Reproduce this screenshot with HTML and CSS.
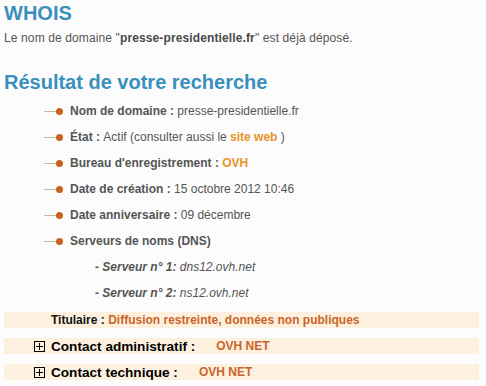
FILE: index.html
```html
<!DOCTYPE html>
<html lang="fr">
<head>
    <meta charset="UTF-8">
    <title>WHOIS</title>
    <link rel="stylesheet" href="styles.css">
</head>
<body>
    <div class="page">
        <h1 class="title">WHOIS</h1>
        <p class="intro">Le nom de domaine "<b>presse-presidentielle.fr</b>" est déjà déposé.</p>

        <h2 class="title result">Résultat de votre recherche</h2>
        <ul class="info">
            <li><span class="bullet"></span><b>Nom de domaine :</b>&nbsp;presse-presidentielle.fr</li>
            <li><span class="bullet"></span><b>État :</b>&nbsp;Actif (consulter aussi le&nbsp;<a href="#" class="link">site web</a>&nbsp;)</li>
            <li><span class="bullet"></span><b>Bureau d'enregistrement :</b>&nbsp;<a href="#" class="link">OVH</a></li>
            <li><span class="bullet"></span><b>Date de création :</b>&nbsp;15 octobre 2012 10:46</li>
            <li><span class="bullet"></span><b>Date anniversaire :</b>&nbsp;09 décembre</li>
            <li><span class="bullet"></span><b>Serveurs de noms (DNS)</b></li>
        </ul>
        <div class="dns">
            <p><b>- Serveur n° 1:</b> dns12.ovh.net</p>
            <p><b>- Serveur n° 2:</b> ns12.ovh.net</p>
        </div>

        <div class="band holder">
            <b>Titulaire :</b>&nbsp;<span class="value">Diffusion restreinte, données non publiques</span>
        </div>
        <div class="band contact">
            <span class="plus"></span>
            <b class="label">Contact administratif :</b>
            <span class="value">OVH NET</span>
        </div>
        <div class="band contact">
            <span class="plus"></span>
            <b class="label">Contact technique :</b>
            <span class="value">OVH NET</span>
        </div>
    </div>
</body>
</html>
```

FILE: styles.css
```css
body {
    margin: 0;
    background-color: #fcfcfc;
    font-family: "Liberation Sans", Arial, sans-serif;
    font-size: 12px;
    color: #555;
}
.page {
    padding: 1px 7px 0 4px;
}
.title {
    margin: 0;
    color: #3a8fbc;
    font-weight: bold;
}
h1.title {
    font-size: 20px;
    line-height: 24px;
}
.intro {
    margin: 6px 0 0;
    line-height: 14px;
    letter-spacing: 0.12px;
}
.intro b {
    color: #4a4a4a;
}
.result {
    margin-top: 24px;
    font-size: 20px;
    line-height: 26px;
}
.info {
    list-style: none;
    margin: 3px 0 0;
    padding: 0 0 0 40px;
}
.info li {
    display: flex;
    align-items: center;
    height: 26px;
    white-space: nowrap;
}
.info b {
    color: #555;
}
.bullet {
    display: flex;
    align-items: center;
    margin-right: 7px;
}
.bullet::before {
    content: "";
    width: 12px;
    height: 1px;
    background-color: #c9b79d;
}
.bullet::after {
    content: "";
    width: 7px;
    height: 7px;
    border-radius: 50%;
    background-color: #c9601c;
}
.link {
    color: #e8922a;
    font-weight: bold;
    text-decoration: none;
}
.dns {
    padding-left: 91px;
}
.dns p {
    margin: 0;
    line-height: 26px;
    font-style: italic;
}
.band {
    display: flex;
    align-items: center;
    height: 16px;
    margin-bottom: 10px;
    background-color: #fdf0df;
    white-space: nowrap;
}
.holder {
    margin-top: 6px;
    padding-left: 47px;
    color: #111;
}
.value {
    color: #c9652a;
    font-weight: bold;
}
.contact {
    padding-left: 30px;
}
.contact .label {
    color: #000;
    font-size: 13.6px;
    margin-right: 21px;
}
.plus {
    position: relative;
    width: 9px;
    height: 9px;
    border: 1px solid #000;
    margin-right: 6px;
}
.plus::before,
.plus::after {
    content: "";
    position: absolute;
    background-color: #000;
}
.plus::before {
    left: 1px;
    right: 1px;
    top: 4px;
    height: 1px;
}
.plus::after {
    top: 1px;
    bottom: 1px;
    left: 4px;
    width: 1px;
}
```
